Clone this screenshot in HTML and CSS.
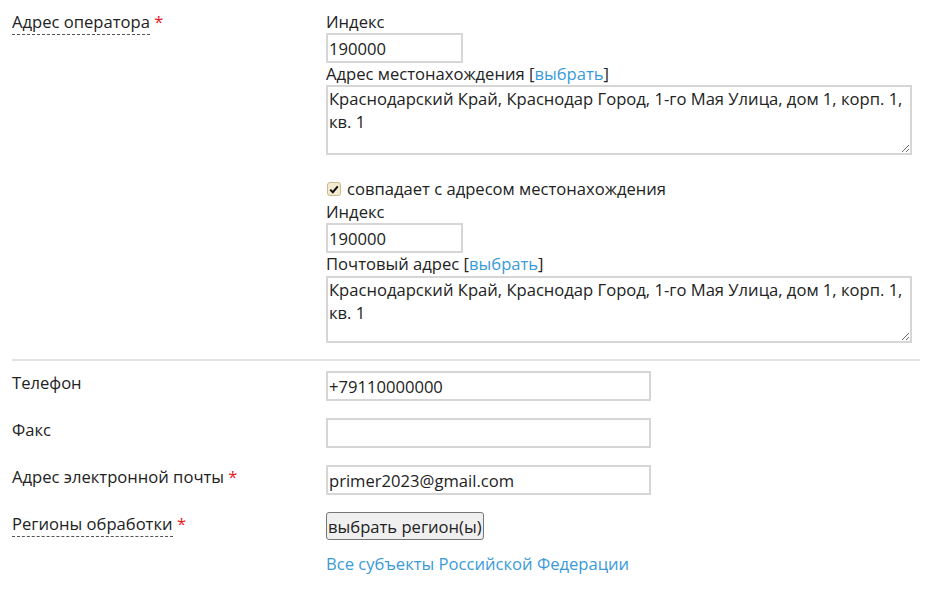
FILE: index.html
```html
<!DOCTYPE html>
<html lang="ru">
<head>
<meta charset="utf-8">
<link rel="stylesheet" href="styles.css">
</head>
<body>
<div class="form">
  <div class="row">
    <div class="label"><span class="hint">Адрес оператора</span> <span class="req">*</span></div>
    <div class="control">
      <div class="sub">Индекс</div>
      <input class="inp small" type="text" value="190000">
      <div class="sub">Адрес местонахождения [<a class="link" href="#">выбрать</a>]</div>
      <textarea class="area first">Краснодарский Край, Краснодар Город, 1-го Мая Улица, дом 1, корп. 1, кв. 1</textarea>
      <div class="check-row"><span class="check"><svg width="10" height="9" viewBox="0 0 10 9"><path d="M1.2 4.6 L3.8 7.2 L8.8 1.4" fill="none" stroke="#111" stroke-width="2"/></svg></span>совпадает с адресом местонахождения</div>
      <div class="sub">Индекс</div>
      <input class="inp small" type="text" value="190000">
      <div class="sub">Почтовый адрес [<a class="link" href="#">выбрать</a>]</div>
      <textarea class="area second">Краснодарский Край, Краснодар Город, 1-го Мая Улица, дом 1, корп. 1, кв. 1</textarea>
    </div>
  </div>
  <hr class="sep">
  <div class="row line">
    <div class="label">Телефон</div>
    <div class="control"><input class="inp wide" type="text" value="+79110000000"></div>
  </div>
  <div class="row line">
    <div class="label">Факс</div>
    <div class="control"><input class="inp wide" type="text" value=""></div>
  </div>
  <div class="row line">
    <div class="label">Адрес электронной почты <span class="req">*</span></div>
    <div class="control"><input class="inp wide" type="text" value="primer2023@gmail.com"></div>
  </div>
  <div class="row line">
    <div class="label"><span class="hint">Регионы обработки</span> <span class="req">*</span></div>
    <div class="control">
      <button class="btn" type="button">выбрать регион(ы)</button>
      <div class="regions"><a class="link" href="#">Все субъекты Российской Федерации</a></div>
    </div>
  </div>
</div>
</body>
</html>
```
FILE: styles.css
```css
html, body {
  margin: 0;
  padding: 0;
  background: #fff;
}
body {
  font-family: "Open Sans", "Liberation Sans", sans-serif;
  font-size: 16.6px;
  line-height: 22px;
  color: #222;
}
.form {
  width: 908px;
  padding: 11px 16px 0 12px;
}
.row {
  display: grid;
  grid-template-columns: 314px 1fr;
}
.label {
  line-height: 22px;
}
.hint {
  border-bottom: 1px dashed #555;
  padding-bottom: 1px;
}
.req {
  color: #e8191f;
}
.control {
  display: flex;
  flex-direction: column;
  align-items: flex-start;
}
.sub {
  height: 22px;
}
.link {
  color: #3b9ad9;
  text-decoration: none;
}
.inp {
  box-sizing: border-box;
  height: 30px;
  margin: 0;
  padding: 0 1px;
  border: 2px solid #d6d6d6;
  font-family: inherit;
  font-size: 16.6px;
  color: #222;
  background: #fff;
  outline: none;
}
.small {
  width: 137px;
}
.wide {
  width: 325px;
}
.area {
  box-sizing: border-box;
  width: 586px;
  margin: 0;
  padding: 0 1px;
  border: 2px solid #d6d6d6;
  font-family: inherit;
  font-size: 16.6px;
  line-height: 23px;
  color: #222;
  resize: both;
  outline: none;
}
.area.first {
  height: 70px;
}
.area.second {
  height: 67px;
  margin-top: 1px;
}
.check-row {
  display: flex;
  align-items: center;
  margin-top: 22px;
  height: 24px;
}
.check {
  box-sizing: border-box;
  width: 14px;
  height: 14px;
  margin: 0 6px 0 1px;
  border: 1px solid #c9ba90;
  border-radius: 3px;
  background: #f4ead0;
  display: flex;
  align-items: center;
  justify-content: center;
}
.sep {
  margin: 16px 0 10px 0;
  height: 2px;
  border: 0;
  background: #e2e2e2;
}
.row.line {
  margin-bottom: 17px;
}
.row.line .label {
  padding-top: 1px;
}
.btn {
  box-sizing: border-box;
  height: 28px;
  margin: 0;
  padding: 0 1px;
  border: 1px solid #767676;
  border-radius: 3px;
  background: #efefef;
  font-family: inherit;
  font-size: 16.6px;
  color: #222;
}
.regions {
  margin-top: 13px;
}
```
